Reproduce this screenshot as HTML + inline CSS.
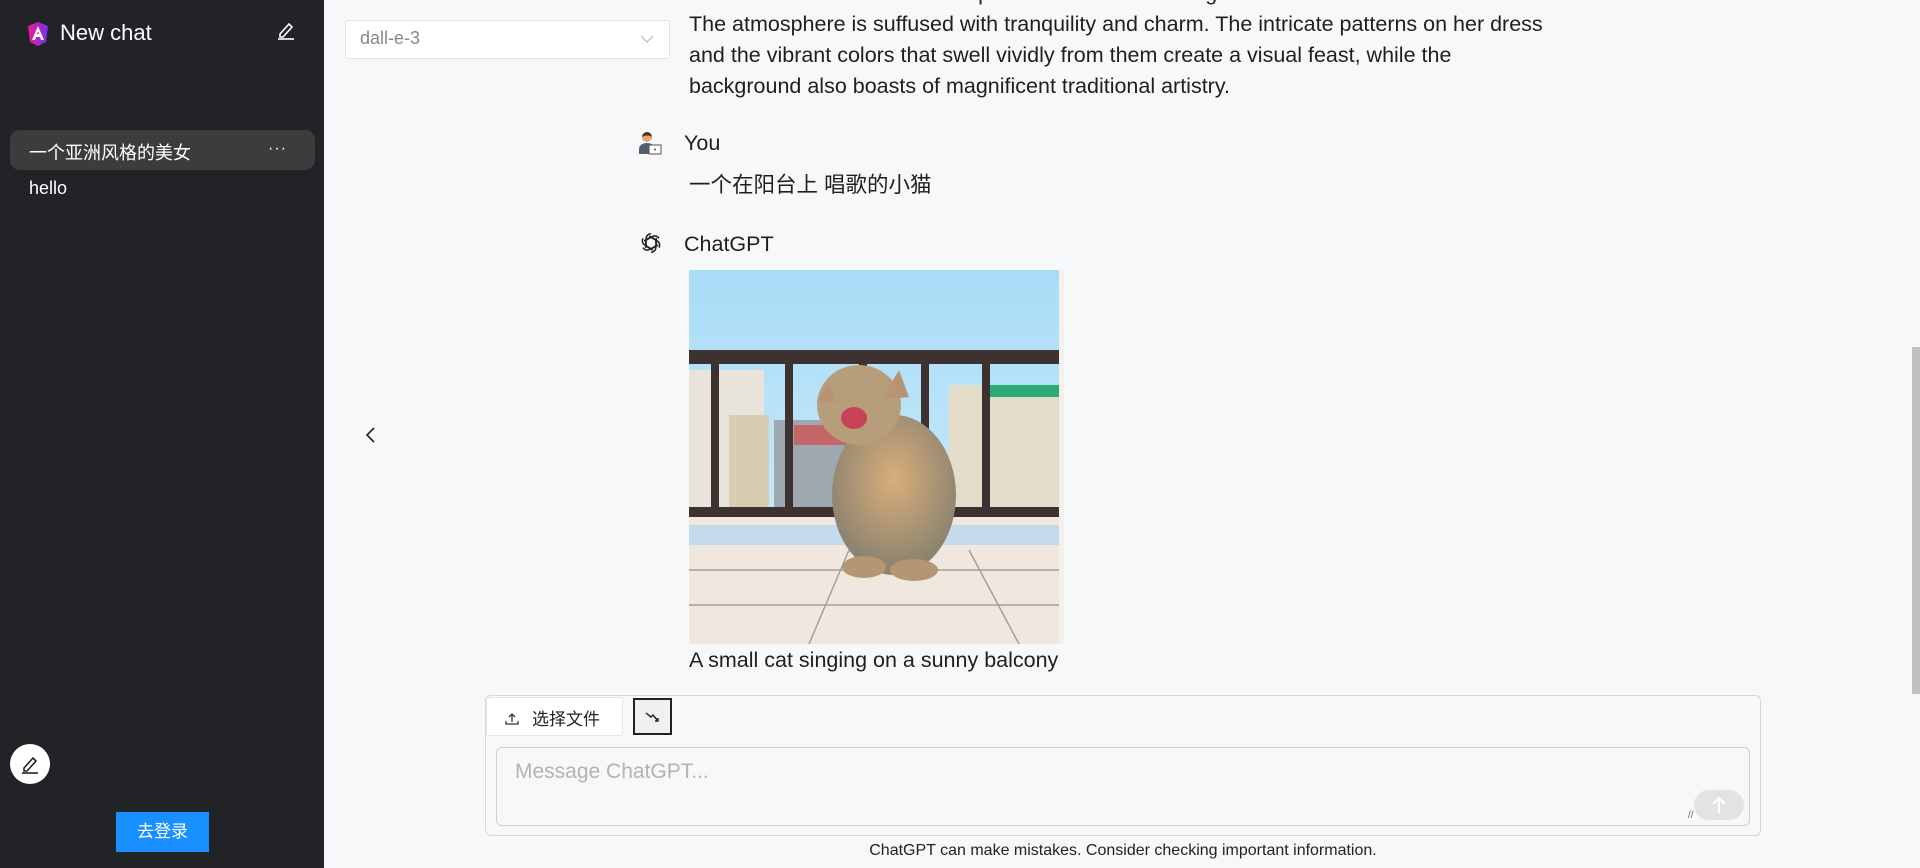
<!DOCTYPE html>
<html><head><meta charset="utf-8"><style>
*{margin:0;padding:0;box-sizing:border-box}
body{width:1920px;height:868px;overflow:hidden;background:#f7f8fa;font-family:"Liberation Sans","Noto Sans CJK SC",sans-serif;position:relative;color:#1f1f1f}
.sb{position:absolute;left:0;top:0;width:324px;height:868px;background:#212327;color:#fff}
.abs{position:absolute}
.t{font-size:21.5px;line-height:31px;color:#1f1f1f}
</style></head><body>
<div class="sb">
  <svg class="abs" style="left:28px;top:22px" width="20" height="26" viewBox="0 0 20 26"><defs><linearGradient id="g" x1="0" x2="1"><stop offset="0" stop-color="#e91e8c"/><stop offset="1" stop-color="#7b2ff7"/></linearGradient></defs><path d="M10 0L20 4 18 20 10 24 2 20 0 4Z" fill="url(#g)"/><path d="M10 4L4 18h3l1-3h4l1 3h3Z" fill="#fff"/><path d="M9 12h2l-1-3z" fill="#e91e8c"/></svg>
  <div class="abs" style="left:60px;top:20px;font-size:22px">New chat</div>
  <svg class="abs" style="left:276px;top:20px" width="20" height="20" viewBox="0 0 20 20" fill="none" stroke="#fff" stroke-width="1.6"><path d="M4 14l9-10 3 3-9 10H4z"/><path d="M2 19h16"/></svg>
  <div class="abs" style="left:10px;top:130px;width:305px;height:40px;background:#3c3c3c;border-radius:10px"></div>
  <div class="abs" style="left:29px;top:139px;font-size:18px">一个亚洲风格的美女</div>
  <div class="abs" style="left:268px;top:140px;font-size:16px;letter-spacing:1px">···</div>
  <div class="abs" style="left:29px;top:178px;font-size:18px">hello</div>
  <div class="abs" style="left:10px;top:744px;width:40px;height:40px;border-radius:50%;background:#fff"></div>
  <svg class="abs" style="left:20px;top:754px" width="20" height="20" viewBox="0 0 20 20" fill="none" stroke="#222" stroke-width="1.6"><path d="M4 14l9-10 3 3-9 10H4z"/><path d="M2 19h16"/></svg>
  <div class="abs" style="left:116px;top:812px;width:93px;height:40px;background:#1890ff;color:#fff;font-size:17px;text-align:center;line-height:40px">去登录</div>
</div>
<div class="abs" style="left:345px;top:20px;width:325px;height:39px;background:#fff;border:1px solid #e2e2e2;border-radius:3px"></div>
<div class="abs" style="left:360px;top:28px;font-size:18px;color:#888">dall-e-3</div>
<svg class="abs" style="left:640px;top:34px" width="14" height="10" viewBox="0 0 14 10" fill="none" stroke="#bbb" stroke-width="1.2"><path d="M1 2l6 6 6-6"/></svg>
<div class="abs t" style="left:689px;top:-22px;width:1000px">classic manner. Her serene expression reflects the elegance and decorum of Asian culture.<br>The atmosphere is suffused with tranquility and charm. The intricate patterns on her dress<br>and the vibrant colors that swell vividly from them create a visual feast, while the<br>background also boasts of magnificent traditional artistry.</div>
<svg class="abs" style="left:638px;top:131px" width="24" height="24" viewBox="0 0 24 24"><circle cx="9" cy="6" r="5" fill="#e7a36b"/><path d="M4 6a5 5 0 0110 0c-2-2-7-2-10 0z" fill="#4a3526"/><path d="M1 23v-5c0-4 4-6 8-6s8 2 8 6v5z" fill="#50606e"/><rect x="11" y="14" width="12" height="9" fill="#fff" stroke="#555"/><circle cx="17" cy="18.5" r="1" fill="#555"/></svg>
<div class="abs t" style="left:684px;top:128px">You</div>
<div class="abs t" style="left:689px;top:170px">一个在阳台上 唱歌的小猫</div>
<svg class="abs" style="left:638px;top:230px" width="26" height="26" viewBox="0 0 24 24" fill="none" stroke="#222" stroke-width="1.4"><g id="p"><path d="M12 3.5a4.5 4.5 0 00-4.5 4.5v7l6 3.5"/></g><use href="#p" transform="rotate(60 12 12)"/><use href="#p" transform="rotate(120 12 12)"/><use href="#p" transform="rotate(180 12 12)"/><use href="#p" transform="rotate(240 12 12)"/><use href="#p" transform="rotate(300 12 12)"/></svg>
<div class="abs t" style="left:684px;top:229px">ChatGPT</div>
<svg class="abs" style="left:689px;top:270px" width="375" height="374" viewBox="0 0 375 374">
<defs><linearGradient id="sky" x1="0" y1="0" x2="0" y2="1"><stop offset="0" stop-color="#a9dcf7"/><stop offset="1" stop-color="#d4eefb"/></linearGradient><radialGradient id="cat" cx=".5" cy=".4" r=".55"><stop offset="0" stop-color="#d9ae7a"/><stop offset="1" stop-color="#8d8470"/></radialGradient></defs>
<rect width="375" height="374" fill="url(#sky)"/>
<rect x="0" y="100" width="75" height="150" fill="#e8e4dc"/>
<rect x="40" y="145" width="40" height="105" fill="#d8cdb0"/>
<rect x="85" y="150" width="80" height="100" fill="#9fa8b0"/>
<rect x="105" y="155" width="55" height="20" fill="#c46567"/>
<rect x="260" y="115" width="115" height="135" fill="#e2dcc8"/>
<rect x="300" y="115" width="75" height="12" fill="#2bab76"/>
<rect x="0" y="80" width="370" height="14" fill="#3d3230"/>
<rect x="0" y="237" width="375" height="10" fill="#3d3230"/>
<rect x="22" y="90" width="8" height="150" fill="#3d3230"/><rect x="96" y="90" width="8" height="150" fill="#3d3230"/><rect x="170" y="90" width="8" height="150" fill="#3d3230"/><rect x="232" y="90" width="8" height="150" fill="#3d3230"/><rect x="293" y="90" width="8" height="150" fill="#3d3230"/>
<rect x="0" y="247" width="375" height="127" fill="#f0e8df"/>
<rect x="0" y="255" width="375" height="20" fill="#c5dbeb"/>
<path d="M160 280L120 374M280 280L330 374M0 300H375M0 335H375" stroke="#a89e96" stroke-width="1.5"/>
<rect x="370" y="0" width="5" height="374" fill="#f4f1ec"/>
<ellipse cx="205" cy="225" rx="62" ry="80" fill="url(#cat)"/>
<ellipse cx="170" cy="135" rx="42" ry="40" fill="#b79e7a"/>
<ellipse cx="165" cy="148" rx="13" ry="11" fill="#c64258"/>
<path d="M140 112l8 20 -20 0z M210 100l-18 30 28 -3z" fill="#b89474"/>
<ellipse cx="175" cy="297" rx="22" ry="11" fill="#b59674"/><ellipse cx="225" cy="300" rx="24" ry="11" fill="#b59674"/>
</svg>
<div class="abs t" style="left:689px;top:645px">A small cat singing on a sunny balcony</div>
<svg class="abs" style="left:364px;top:425px" width="14" height="20" viewBox="0 0 14 20" fill="none" stroke="#222" stroke-width="1.6"><path d="M10 3L3 10l7 7"/></svg>
<div class="abs" style="left:485px;top:695px;width:1276px;height:141px;border:1px solid #d6d6d6;border-radius:6px"></div>
<div class="abs" style="left:486px;top:697px;width:137px;height:39px;background:#fff;border:1px solid #e6e6e6;border-radius:3px"></div>
<svg class="abs" style="left:504px;top:710px" width="16" height="16" viewBox="0 0 16 16" fill="none" stroke="#333" stroke-width="1.3"><path d="M8 12V4M5 7l3-3 3 3M2 11v3h12v-3"/></svg>
<div class="abs" style="left:532px;top:705px;font-size:17px;color:#222">选择文件</div>
<div class="abs" style="left:633px;top:698px;width:39px;height:37px;border:2px solid #222;background:#f0f0f0"></div>
<svg class="abs" style="left:644px;top:707px" width="18" height="18" viewBox="0 0 18 18" fill="none" stroke="#222" stroke-width="1.4"><path d="M2 6l5 4 2-2 5 6M14 11v3h-3"/></svg>
<div class="abs" style="left:496px;top:747px;width:1254px;height:79px;border:1px solid #cfcfcf;border-radius:6px"></div>
<div class="abs" style="left:515px;top:760px;font-size:21px;color:#b3b3b3">Message ChatGPT...</div>
<div class="abs" style="left:1688px;top:810px;font-size:10px;color:#666">//</div>
<div class="abs" style="left:1694px;top:790px;width:50px;height:30px;border-radius:15px;background:#e3e3e3"></div>
<svg class="abs" style="left:1710px;top:795px" width="18" height="20" viewBox="0 0 18 20" fill="none" stroke="#fff" stroke-width="2"><path d="M9 18V3M3 9l6-6 6 6"/></svg>
<div class="abs" style="left:0;width:2246px;top:842px;text-align:center;font-size:16px;color:#222">ChatGPT can make mistakes. Consider checking important information.</div>
<div class="abs" style="left:1912px;top:347px;width:8px;height:347px;background:#c1c1c1"></div>
</body></html>
